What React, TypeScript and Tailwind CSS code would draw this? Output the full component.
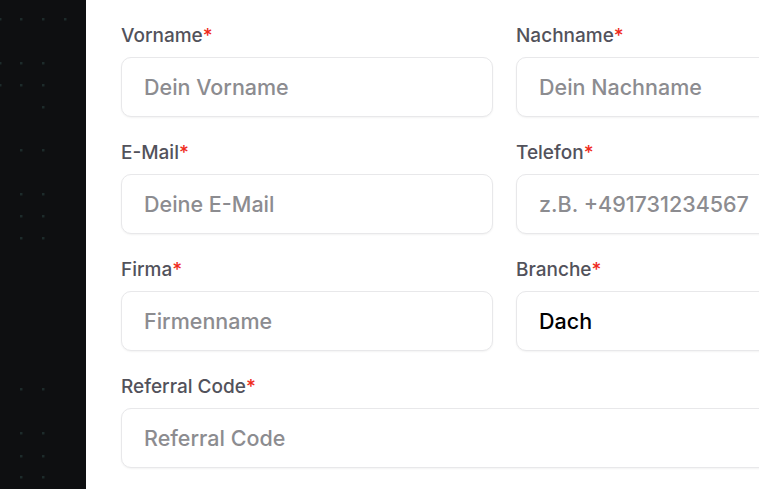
import React from 'react';

const dots: Array<[number, number]> = [
  [0, 19], [21, 19], [43, 19], [65, 19],
  [0, 63], [21, 63], [43, 63],
  [0, 85], [21, 85], [43, 85],
  [43, 107],
  [21, 150], [43, 150],
  [21, 194], [43, 194],
  [21, 216], [43, 216],
  [21, 238], [43, 238],
  [21, 389], [43, 389],
  [21, 433], [43, 433],
  [21, 456], [43, 456],
  [21, 477], [43, 477],
];

const Label = ({ text }: { text: string }) => (
  <label className="block h-6 mb-2.5 pt-px text-[19px] leading-6 font-medium text-[#52525b] whitespace-nowrap">
    {text}
    <span className="text-[#ef2b1d]">*</span>
  </label>
);

const Field = ({
  label,
  placeholder,
  value,
}: {
  label: string;
  placeholder: string;
  value?: string;
}) => (
  <div className="min-w-0">
    <Label text={label} />
    <input
      type="text"
      placeholder={placeholder}
      defaultValue={value}
      className="block w-full h-[60px] px-[22px] rounded-[10px] border border-[#e8e8ea] bg-white shadow-[0_1px_2px_rgba(0,0,0,0.05)] text-[21.5px] font-medium text-black placeholder:text-[#8c8c90] outline-none"
    />
  </div>
);

export default function App() {
  return (
    <div
      className="flex h-[489px] w-[759px] overflow-hidden bg-white"
      style={{ fontFamily: 'Inter, "Noto Sans", sans-serif' }}
    >
      <aside className="relative w-[86px] shrink-0 bg-[#0e0f11]">
        <svg className="absolute inset-0" width="86" height="489">
          {dots.map(([x, y], i) => (
            <rect key={i} x={x - 1} y={y - 1} width="2.5" height="2.5" fill="#1d2b2b" />
          ))}
        </svg>
      </aside>
      <main className="shrink-0 w-[838px] pl-[35px] pt-[23px]">
        <div className="grid grid-cols-[372px_372px] gap-x-[23px] gap-y-[23px]">
          <Field label="Vorname" placeholder="Dein Vorname" />
          <Field label="Nachname" placeholder="Dein Nachname" />
          <Field label="E-Mail" placeholder="Deine E-Mail" />
          <Field label="Telefon" placeholder="z.B. +491731234567" />
          <Field label="Firma" placeholder="Firmenname" />
          <Field label="Branche" placeholder="Branche" value="Dach" />
          <div className="col-span-2">
            <Field label="Referral Code" placeholder="Referral Code" />
          </div>
        </div>
      </main>
    </div>
  );
}
